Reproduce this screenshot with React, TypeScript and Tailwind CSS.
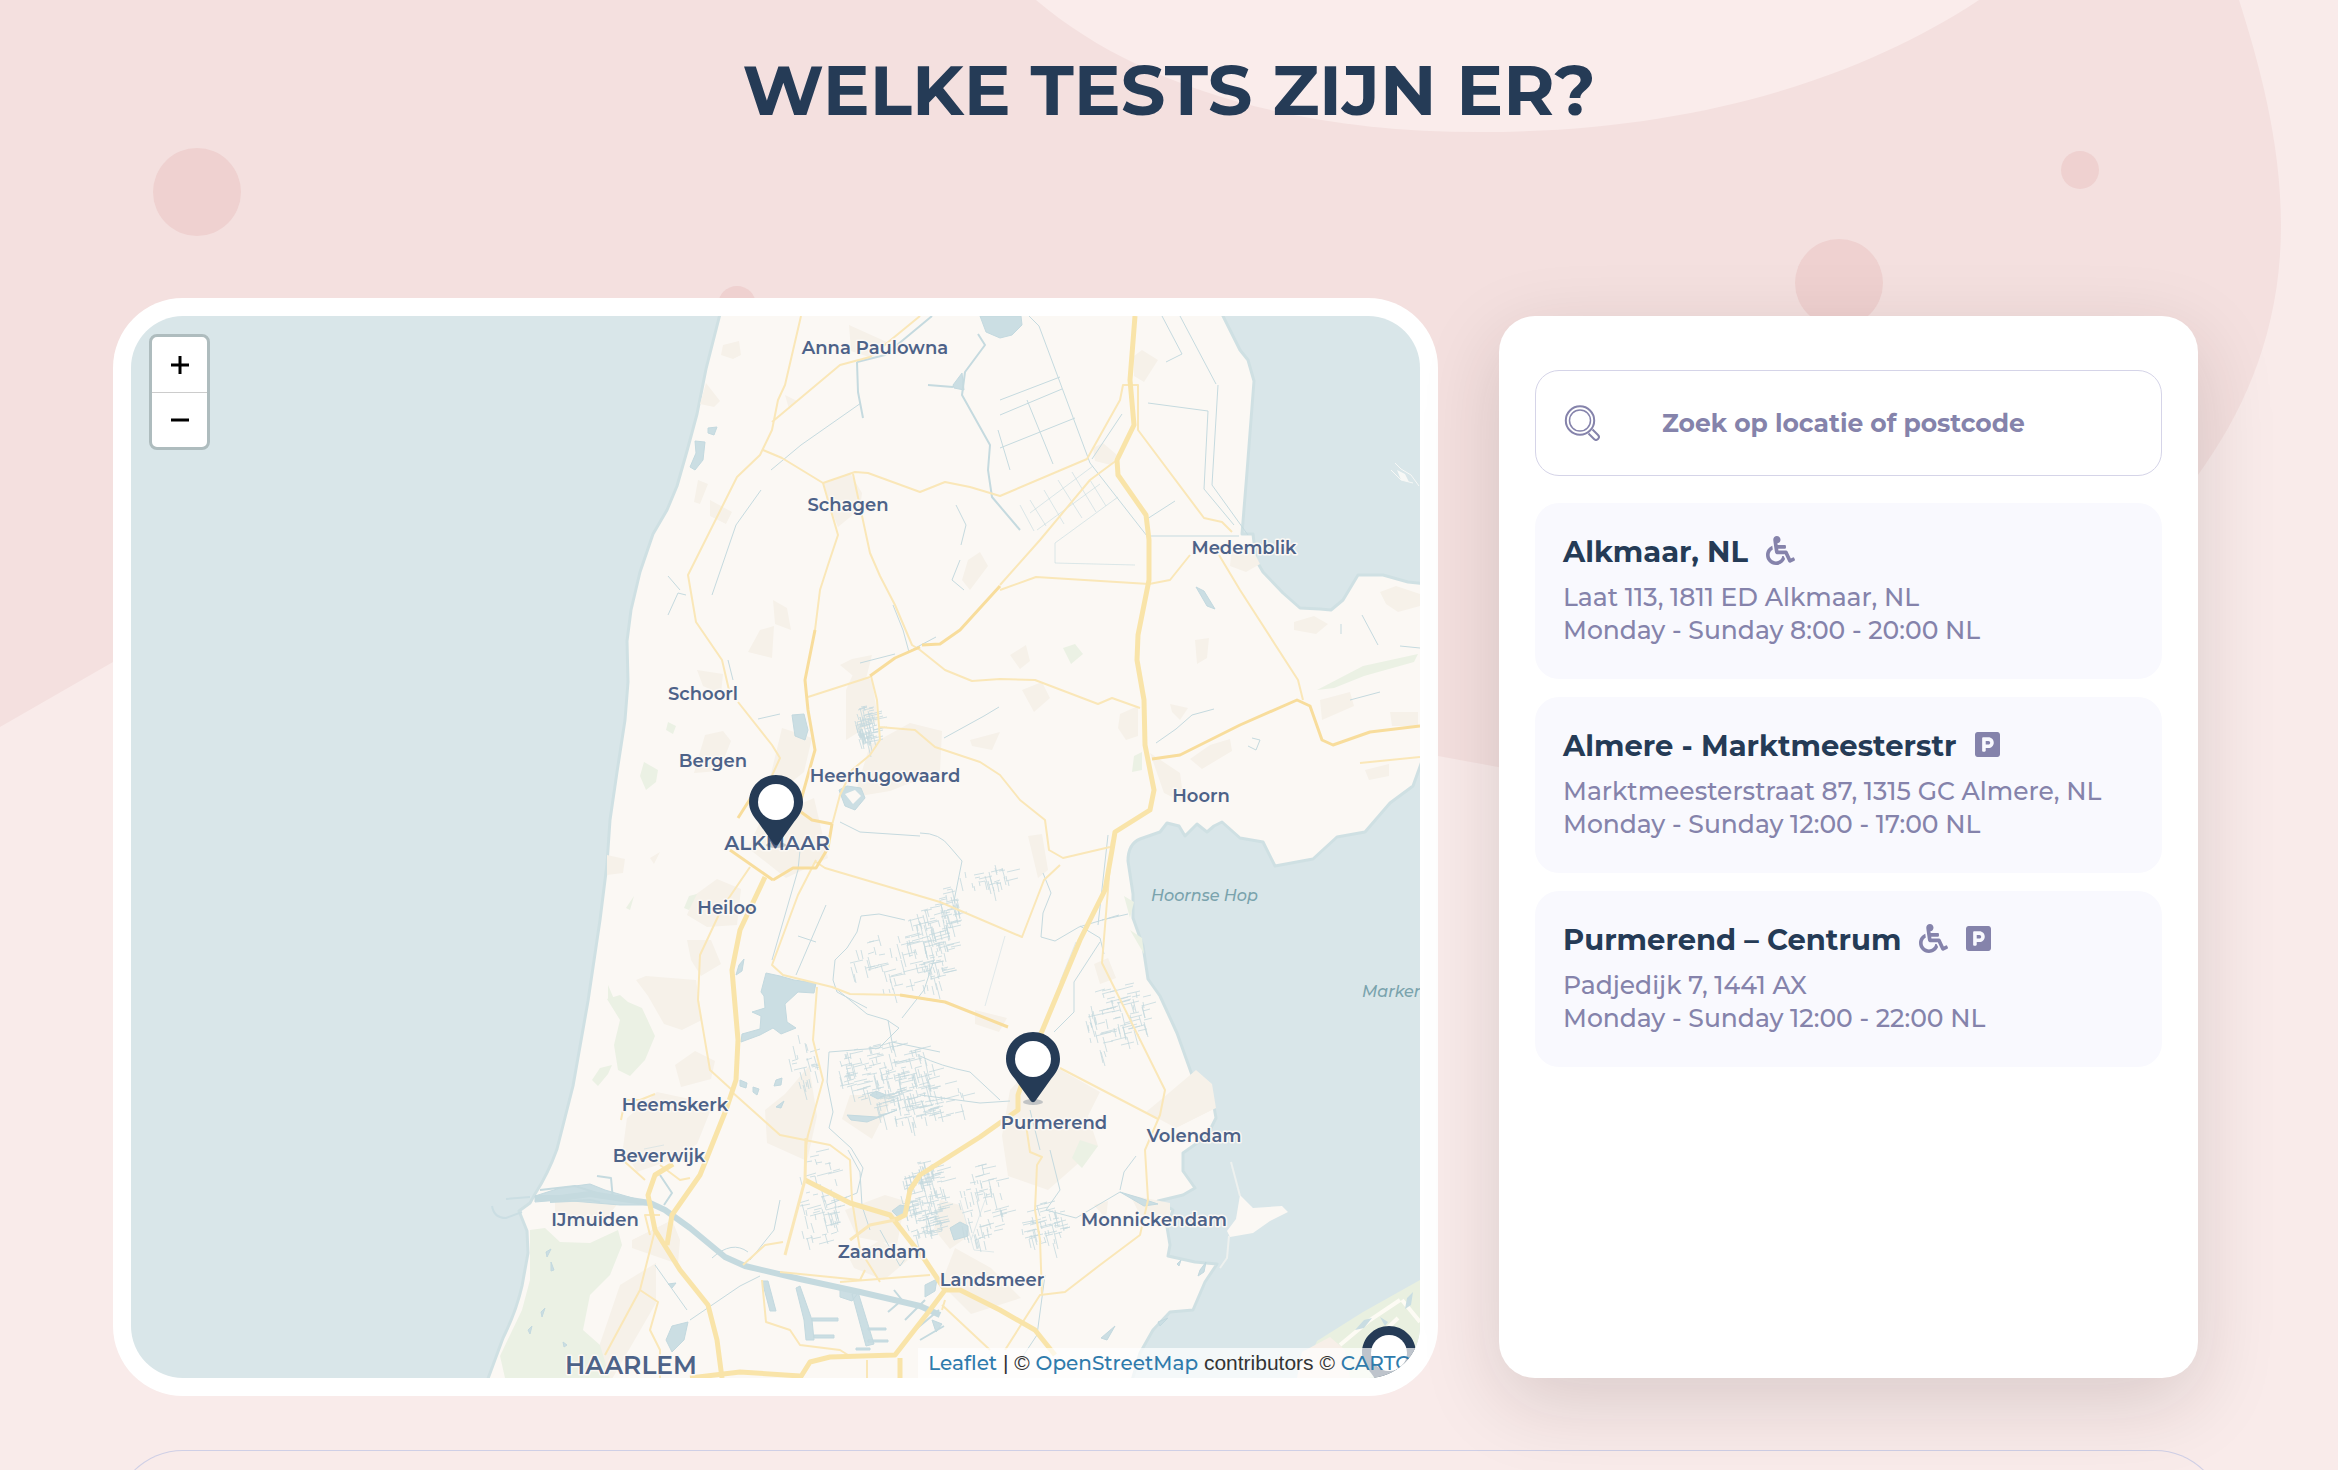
import React from "react";
import { FaParking, FaWheelchair } from "react-icons/fa";

type Amenity = "wheelchair" | "parking";

interface Location {
  name: string;
  address: string;
  hours: string;
  amenities: Amenity[];
}

const locations: Location[] = [
  { name: "Alkmaar, NL", address: "Laat 113, 1811 ED Alkmaar, NL", hours: "Monday - Sunday 8:00 - 20:00 NL", amenities: ["wheelchair"] },
  { name: "Almere - Marktmeesterstr", address: "Marktmeesterstraat 87, 1315 GC Almere, NL", hours: "Monday - Sunday 12:00 - 17:00 NL", amenities: ["parking"] },
  { name: "Purmerend – Centrum", address: "Padjedijk 7, 1441 AX", hours: "Monday - Sunday 12:00 - 22:00 NL", amenities: ["wheelchair", "parking"] },
];

const towns: { name: string; x: number; y: number; size?: number }[] = [
  { name: "Anna Paulowna", x: 875, y: 354 },
  { name: "Schagen", x: 848, y: 511 },
  { name: "Schoorl", x: 703, y: 700 },
  { name: "Bergen", x: 713, y: 767 },
  { name: "Heerhugowaard", x: 885, y: 782 },
  { name: "Medemblik", x: 1244, y: 554 },
  { name: "Hoorn", x: 1201, y: 802 },
  { name: "ALKMAAR", x: 777, y: 850, size: 20 },
  { name: "Heiloo", x: 727, y: 914 },
  { name: "Heemskerk", x: 675, y: 1111 },
  { name: "Beverwijk", x: 659, y: 1162 },
  { name: "IJmuiden", x: 595, y: 1226 },
  { name: "Zaandam", x: 882, y: 1258 },
  { name: "HAARLEM", x: 631, y: 1374, size: 25 },
  { name: "Purmerend", x: 1054, y: 1129 },
  { name: "Volendam", x: 1194, y: 1142 },
  { name: "Monnickendam", x: 1154, y: 1226 },
  { name: "Landsmeer", x: 992, y: 1286 },
];

const MAINLAND =
  "M721 310 706 369 697 414 687 451 677 486 667 510 653 534 640 572 631 610 627 641 628 682 625 720 617 772 610 820 607 864 600 920 588 1001 573 1086 557 1149 Q548 1174 535 1194 L530 1203 519 1211 527 1231 528 1253 522 1286 Q516 1312 503 1338 L486 1384 H1131 L1140 1353 1153 1330 1170 1312 1193 1310 1205 1282 1217 1264 1195 1262 1168 1256 1170 1245 1167 1227 1173 1210 1158 1201 1183 1195 1195 1188 1183 1171 1183 1153 1207 1136 1216 1118 1213 1101 1203 1090 1192 1075 1177 1033 1160 996 1148 979 1143 946 1133 918 1133 894 1128 861 Q1128 844 1140 839 L1160 832 1167 823 1179 826 1185 836 1197 824 1207 832 1214 826 1222 822 1240 838 1263 842 1275 866 1313 859 1337 837 1365 832 1390 803 1413 786 1426 750 V584 L1408 582 1383 575 1358 575 1343 600 1331 610 1320 609 1300 608 1283 593 1263 572 1256 560 1253 534 H1242 L1247 472 1254 381 1248 360 1240 350 1220 310Z";

const hatch = (cx: number, cy: number, rx: number, ry: number, seed: number, count: number): string => {
  let s = seed;
  const rnd = () => {
    s = (s * 16807) % 2147483647;
    return s / 2147483647;
  };
  rnd();
  rnd();
  let d = "";
  for (let i = 0; i < count; i++) {
    const angle = rnd() * Math.PI * 2;
    const radius = Math.sqrt(rnd());
    const px = cx + Math.cos(angle) * radius * rx;
    const py = cy + Math.sin(angle) * radius * ry;
    const len = 4 + rnd() * 12;
    const across = rnd() > 0.5;
    const dx = across ? len : len * 0.25;
    const dy = across ? -len * 0.25 : len;
    d += `M${Math.round(px)} ${Math.round(py)}l${Math.round(dx)} ${Math.round(dy)}`;
  }
  return d;
};

const ditches = [
  hatch(890, 962, 40, 28, 1101, 50),
  hatch(928, 945, 24, 42, 2303, 110),
  hatch(885, 1072, 52, 32, 3105, 170),
  hatch(905, 1105, 32, 20, 4107, 55),
  hatch(818, 1200, 20, 50, 5109, 60),
  hatch(802, 1060, 14, 26, 6111, 26),
  hatch(922, 1200, 22, 40, 7113, 150),
  hatch(980, 1205, 22, 40, 8115, 70),
  hatch(1044, 1225, 24, 22, 9117, 60),
  hatch(1108, 1020, 24, 34, 10119, 50),
  hatch(1132, 1010, 18, 28, 11121, 36),
  hatch(985, 876, 26, 12, 12123, 30),
  hatch(940, 1100, 26, 18, 13125, 26),
  hatch(865, 724, 10, 20, 14127, 80),
  hatch(948, 905, 10, 20, 15129, 36),
].join("");

function MapArt() {
  return (
    <svg
      className="absolute inset-0 h-full w-full"
      viewBox="131 316 1289 1062"
      preserveAspectRatio="xMidYMid slice"
      role="img"
      aria-label="Kaart van Noord-Holland"
      fontFamily="Montserrat, Inter, sans-serif"
    >
      <rect x="131" y="316" width="1289" height="1062" fill="#d9e6e9" />
      <path d={MAINLAND} fill="#fbf8f4" stroke="#cfe0e3" strokeWidth="3" strokeLinejoin="round" />
      <path d="M1240 1195 1253 1208 1282 1206 1288 1212 1270 1221 1253 1233 1230 1237 1227 1231 1236 1219Z" fill="#fbf8f4" />
      <path d="M1231 1162 1240 1196M1229 1236 1227 1258 1220 1268" stroke="#eef1ef" strokeWidth="2" fill="none" />
      <path d="M1420 1280 1363 1312 1317 1341 1300 1378H1420Z" fill="#e9f0e0" />
      <path d="M1330 1337 1302 1352 1297 1378H1350L1345 1350Z" fill="#f7efe8" />
      <path d="M1340 1345 1370 1320 1400 1300M1375 1340 1398 1318M1402 1300 1420 1322" stroke="#fdfbf4" strokeWidth="4" fill="none" />
      <path d="M1355 1330 1364 1320 1372 1318 1364 1328ZM1407 1298l6-6-2 13-6 4ZM1380 1317l8 5-3 4Z" fill="#c9dde2" />
      <path d="m1397 470 8 4 4 8-8-2Z" fill="#f7f8f6" />
      <path d="m1395 463 6 6 10 6 8 11M1391 470l10 10 12 3" stroke="#f7f8f6" strokeWidth="1" fill="none" />

      {/* Built-up areas */}
      <g fill="#f6f1e9">
        <path d="M823 483l27-10 12 20-2 16-22 18-8-20ZM849 325l40 18-20 14-18-6ZM723 345l16-4 2 14-8 4-12-4ZM706 383l14 18-6 6-14-3ZM785 395l12 6-8 8ZM698 480l10 4-8 20-6-2ZM710 500l22 12-6 12-16-8ZM773 600l14 8 4 22-16-6ZM760 630l14-4-2 32-24-6ZM840 665l12-6 20-4-6 24-14-4ZM697 670l26 4-2 20-18-8ZM705 735l18-4 8 10-12 30-25 2ZM782 728l30 10-8 34-30 24-5-14ZM846 690l8-18 18 8 6 40-32 20ZM870 745l40-22 32 8-2 40-50 20-36 6ZM970 740l30-8-8 18-20-4ZM968 560l12-8 8 14-18 24-8-10Z" />
        <path d="M760 822l54-24 14 60-42 20-38-30ZM695 895l22-16 24 10-4 36-30 2-20-12ZM687 940h24l10 24-20 12-10-16ZM636 980l10-4 50 4 6 40-20 10-18-6-16-28ZM675 1065l20-14 20 10-4 18-30 8ZM627 1118l30-26 56 12-16 40-20 14-40 14-14-24ZM765 1110l20-16 24-28 8 50-10 45-40-18ZM850 1095h44l-22 44-30-20ZM555 1195h70l-20 24-30 8-20-14ZM632 1240l40-20 8 20-2 24-46-16ZM620 1285l36-22v40l-44 76-22-6ZM845 1210l40-15 20 6-8 44-40-8ZM850 1260l30-20 28 20-24 20-30-12ZM800 835l10-6-2 18-8 6ZM607 855l18 4-2 14-16 2ZM650 858l10-6-6 12Z" />
        <path d="M1134 356l8-6 16 10-14 22-10-6ZM1093 448l10-5 14 12-6 10-16-4ZM1232 546l20 2 8 16-14 8-16-6ZM1380 592l16-6 24 8v12l-22 6-12-8ZM1294 622l20-6 14 8-12 10-22-4ZM1320 700l30-8 4 14-32 14ZM1195 640l14-2-2 20-10 6ZM1120 714l18-8v30l-12 4-8-12ZM1170 704l18 4-8 12-8-8ZM1022 690l20-8 8 16-16 14ZM1210 745l20-6 2 12-30 18-12-10ZM1150 753l30 20 4 30-20-10ZM1010 655l16-10 4 16-10 8ZM1390 712h28v14h-26ZM1365 770l24-6v12l-20 4Z" />
        <path d="M1010 1090l30-32 60 34-12 24 10 30-50 44-40-14-6-40ZM975 1010l32 8-8 14-24-8ZM1094 964l14-6 8 20-16 6ZM1028 836l14-2 6 36-10 8ZM1170 1092l26-22 16 14 4 24-40 20-30-16ZM940 1200l20 5 10 30-20 14-16-20ZM955 1248l36 20 30 30-50 16-30-30ZM1130 1195l40 8v16l-30-4ZM1094 1205l14-4-2 18Z" />
      </g>
      {/* Parks and dunes */}
      <path
        fill="#ebf1e4"
        d="M530 1230 545 1228 560 1242 590 1243 618 1230 622 1245 610 1275 590 1295 583 1330 600 1345 610 1378H505L500 1356 522 1310 530 1280ZM607 999 620 995 628 1002 642 1008 655 1036 645 1060 630 1076 618 1070 614 1045 620 1020ZM592 1080 600 1068 612 1065 608 1074 598 1086ZM608 985l6 14h-6ZM626 908l8-12-4 14ZM1063 648l12-4 8 10-12 10ZM668 722l8 4-3 8-7-4ZM644 762l14 8-2 12-10 8-6-14ZM1080 1140l18 6-16 22-10-10ZM1134 756l8-4v18l-10 2ZM1124 896l10 6-4 16ZM1130 930l12 8 2 16ZM1317 690l46-24 55-12-4 8-50 14-30 12ZM684 908l5-12 8-2-8 16Z"
      />
      {/* Lakes and harbours */}
      <g fill="#cbdee3" stroke="#c3d9df" strokeWidth="1">
        <path d="M980 316H1021L1022 325 1012 335 1000 338 986 332ZM953 385l9-12 2 17-10-2ZM708 428l9-1-3 8-6-2ZM695 441l10 1-2 18-8 10-5-3 6-14ZM792 715l12-1 4 16-3 10-10-4ZM1196 587l8 4 11 18-8-3Z" />
        <path d="M766 973 780 976 794 980 816 983 814 993 798 992 785 1004 787 1022 796 1028 781 1034 773 1028 760 1035 741 1042 742 1034 760 1029 761 1016 752 1012 765 1008 764 996 761 992Z" />
        <path d="M739 965l5-6-2 12-6 4ZM740 1080l7 3-1 5-6-2ZM753 1087l6 2-2 6-4-3ZM776 1080l6-2-1 7-7 1ZM776 1107l8-6-3 7Z" />
        <path d="M535 1196 560 1188 590 1184 605 1190 650 1203 653 1205 620 1205 560 1200 535 1202Z" />
        <path d="M960 1222 968 1226 968 1236 954 1240 950 1228ZM892 1211l8-6 10 2-4 8-8 2ZM847 1115l30 2 20-7-30 12-16-2ZM870 1095l6-4 10 4-8 4Z" />
        <path d="M768 1281l8 30h-6l-8-30ZM800 1286l12 34 2 20h-8l-2-20-8-32ZM812 1318h26v3h-26ZM814 1335h20v3h-20ZM858 1292l16 52-8 2-14-52ZM868 1328h18v2h-18ZM868 1340h20v2h-20ZM856 1348h14v2h-14ZM840 1290l18 3-6 8-12-4Z" />
        <path d="M672 1326l16-4-4 18-12 12-6-12ZM546 1252l5-3-4 8ZM551 1262l3 8-3 1ZM541 1312l4-4-3 9ZM528 1330l4-4-2 8ZM563 1342l4 3-3 2ZM668 1284l8-1-4 5ZM839 790l8-4 14 2 4 10-10 12-10-4Z" />
        <path d="M1101 1338l14-12-8 14ZM1177 1264l4-4-2 6ZM1200 1270l6-8-2 10-6 4ZM1158 1322l10-4-8 8ZM925 1285l12-6-2 12-10 6ZM932 1320l10 4-6 8ZM1120 1192l20 6 18 6-14 2Z" />
      </g>
      <path d="M845 794l10-4 6 6-8 8Z" fill="#fbf8f4" />
      <path d="M492 1206q2 12 14 12l16-6M506 1199l24-2" stroke="#cbdee3" strokeWidth="2" fill="none" />

      {/* Canals */}
      <g fill="none" stroke="#c5dadf" strokeWidth="1" strokeLinejoin="round">
        <path d={ditches} opacity=".8" />
        <path d="M535 1198H560L590 1194 650 1203 665 1210 690 1228 725 1257 745 1266 800 1279 860 1292 920 1306 940 1315" strokeWidth="6" />
        <path d="M540 1190 575 1186 600 1194 630 1198M550 1202 590 1200 600 1202M597 1176l14 2 2 22M660 1175l12 18-8 12M888 1312l14-12-8-10M905 1320l20-20M915 1330l24-20M920 1340l24-14" strokeWidth="2" />
        <path d="M978 334 985 345 965 372 962 395 990 445 988 470 992 497 1020 530M857 362l1 30 5 26M928 385l25 2M857 362 885 355 932 316" strokeWidth="2" />
        <path d="M1029 316l10 10 51 137 57 73h92M1092 459l30-45M1147 519l28-18M1180 316l36 68M1162 316l20 38-16 8M1148 403l60 8-4 78 30 36M1218 385l-6 100 36 50M1000 400l60-23M1000 415l62-26M1000 448l75-30M1027 400l26 64M1010 470l-12-40" />
        <path d="M1030 513 1093 466M1037 530 1100 484M1055 543 1118 497M1030 500l16 26M1044 490l20 34M1058 480l24 38M1072 472l24 40M1020 505l14 26M1090 480l16 26M1055 543v20l80 2" opacity=".6" />
        <path d="M860 663 895 654M893 605l10 25 6 22M902 655l34-18M956 505l10 20-5 20M960 560l-8 20 12 10M944 738l40-22 15-9M758 719l22-5M728 660l5 20M771 470l30-25 60-42M712 595l24-70 25-35M668 615l10-22 8 2M680 590l-12-14" />
        <path d="M840 822l20 10 60 4M800 850l-2 20-26 90M826 905l-30 70M798 936l18 6M834 987l33 27 20 6 12 8-20 20-50 4-2 30 6 30-4 16 22 20 12 20-6 25-30 12M888 1020l4 22 48 10M905 920l-26-6-18 2-4 16-10 16-12 12-2 20 4 12 30 16M934 960l-10 30-22 28M1043 873l8 20-8 20-2 24 14 4 24-14 40-12M1100 942l-26 40v30l-20 20M920 833q20 0 30 14l12 14-8 40M1080 926l20 12 4 16M1128 914l-26 6" />
        <path d="M920 1056q20 10 50 16l30 28M920 1095l60 8 30-2M1030 1110l10 40M1050 1150l10 40-14 20 30 8 44-26M1120 1190l4-18 12-16M1045 1275l-8 60-20 30M780 1200l-6 30-24 30M848 1150l12 22 2 34 8 24M880 1230l20 36 14-20M655 1265l32 45M712 1258q20-18 36-6M690 1320l50-34 20-10" />
        <path d="M1156 743l20-14 16-14 22-6M1362 615l16 30M1400 646l20 2M1350 700l30-8M1252 738l8 2-4 10-8-4M1341 624v10M1108 835l-10 90" />
        <path d="M664 1145l-20 4M905 1200l30 4M960 1200l14 50 20 2M985 1200l-14 40M1060 982l16-40M985 1006l20-70" opacity=".5" />
      </g>

      {/* Secondary roads */}
      <g fill="none" stroke="#fae7b8" strokeWidth="2" strokeLinejoin="round">
        <path d="M801 316 785 385 778 400 772 430 760 455 737 477 688 575 696 622 722 660 729 690M738 702 772 745 780 758 770 780M772 422 840 365 870 357 920 316M763 450 782 458 823 483 855 472 868 473 920 492 945 482 970 487 1000 496 1087 459 1120 400 1123 385H1138V430L1204 518 1222 522 1232 532" />
        <path d="M823 483 838 535 828 565 820 590 815 630M853 474 870 553 880 576 895 605 912 645 920 650 945 670 972 681 1000 679 1035 680 1098 704 1112 698 1140 708M808 697 870 677M871 676 877 700 880 740 870 755 852 770 840 795 832 825M879 727 915 730 935 747 980 762 1000 775 1020 800 1045 820 1049 850 1063 858 1110 847M1219 555 1240 590 1298 680 1303 700M1149 584 1036 577 1000 590M1149 584 1170 580 1190 555M1117 460 1090 480 1040 540 1000 585" />
        <path d="M750 867 722 908 700 955 698 1000 710 1070 732 1090M816 862 825 868 940 902 1022 937 1044 880 1060 865M816 860 798 895 772 965 783 975 832 987 850 994 900 995 945 1002M817 987 813 1040 823 1080 808 1135 806 1145M732 1092 780 1135 830 1145 850 1160 852 1200 860 1250 880 1282" />
        <path d="M655 1094 640 1100 625 1100 621 1120M625 1162 645 1180M660 1165 680 1180 690 1178M655 1230 640 1290 605 1355M640 1290 658 1302 650 1330 660 1350V1378M743 1265 765 1245 783 1242M780 1272 860 1280 865 1270M762 1280 766 1322 790 1330 800 1345 840 1350 848 1355M840 1282 930 1275M660 1215H645L650 1235M867 1360V1378" />
        <path d="M1112 840 1102 963 1165 1090 1160 1115 1145 1150 1148 1200 1140 1235 1100 1265 1065 1292 1040 1295 1005 1350M1060 1068 1158 1119M1025 1118 1030 1152 1042 1157 1037 1165 1035 1210 1040 1240 1042 1295M942 1310 945 1300M942 1305 990 1350M1360 763 1420 757" />
      </g>
      {/* Main roads */}
      <g fill="none" stroke="#f8dd9c" strokeWidth="3" strokeLinejoin="round">
        <path d="M1000 586 960 630 940 644 922 645M920 647 895 658 870 676M815 630 805 680 808 710 815 750 801 800M801 812 812 820 832 824M832 824 828 848 816 868 793 868 773 880M730 850 773 880M900 995 945 1002 1008 1027M1152 759 1180 755 1210 740 1240 725 1297 700 1310 706 1322 740 1333 745 1370 732 1420 726M738 818 752 796" />
      </g>
      {/* Motorways */}
      <g fill="none" stroke="#f9e4a9" strokeWidth="5" strokeLinejoin="round">
        <path d="M1135 316 1130 380 1134 425 1117 460 1118 475 1146 515 1149 540V580L1138 635 1137 660 1144 700 1145 745 1154 790 1150 810 1115 832 1112 850 1105 890 1080 940 1030 1060 1018 1095 1018 1110 980 1137 920 1175 910 1190 905 1215 895 1220" />
        <path d="M765 877 740 930 732 970 738 1040 736 1080 726 1110 700 1175 672 1215 667 1245M673 1164 655 1175 648 1195 655 1230 680 1270 708 1305 717 1340 722 1378" />
        <path d="M805 1180 850 1203 890 1215 925 1260 945 1290 930 1310 895 1355 830 1357 810 1362 800 1378M943 1290H960L1000 1310 1035 1330 1055 1355M690 1378 740 1372 800 1376M900 1358V1378" />
      </g>
      <path d="M806 1138 805 1180 785 1255M850 1240 870 1225 895 1220" fill="none" stroke="#fae7b8" strokeWidth="3" />

      <g fill="#4d6288" fontWeight="600" textAnchor="middle" stroke="#fbf8f4" strokeWidth="3" strokeLinejoin="round" paintOrder="stroke">
        {towns.map((town) => (
          <text key={town.name} x={town.x} y={town.y} fontSize={town.size ?? 18}>
            {town.name}
          </text>
        ))}
      </g>
      <g fill="#7aa3ad" fontSize="16" fontStyle="italic" fontWeight="500">
        <text x="1151" y="901">Hoornse Hop</text>
        <text x="1362" y="997">Marker</text>
      </g>
    </svg>
  );
}

function Pin({ label, place }: { label: string; place: string }) {
  return (
    <button type="button" aria-label={label} className={`absolute w-[54px] -translate-x-1/2 ${place}`}>
      <svg viewBox="0 0 54 74" className="block w-full">
        <ellipse cx="27" cy="70" rx="10" ry="3" fill="#253b56" opacity=".25" />
        <path d="M27 0C12 0 0 12 0 27c0 8 4 14 9 20l15 21c2 3 4 3 6 0l15-21c5-6 9-12 9-20C54 12 42 0 27 0Z" fill="#253b56" />
        <circle cx="27" cy="27" r="18" fill="#fff" />
      </svg>
    </button>
  );
}

function MapPanel() {
  return (
    <div className="min-w-0 rounded-[70px] bg-white p-[18px]">
      <div className="relative h-[1062px] overflow-hidden rounded-[52px]">
        <MapArt />
        <Pin label="Alkmaar, NL" place="left-[50%] top-[43.2%]" />
        <Pin label="Purmerend – Centrum" place="left-[70%] top-[67.4%]" />
        <Pin label="Almere - Marktmeesterstr" place="left-[97.6%] top-[95.1%]" />
        <div className="absolute left-[18px] top-[18px] flex w-[61px] flex-col overflow-hidden rounded-lg border-[3px] border-[#aebcbe] bg-white text-black">
          <button type="button" aria-label="Zoom in" className="flex h-14 items-center justify-center border-b border-[#ccc]">
            <svg viewBox="0 0 18 18" className="size-[18px]" stroke="currentColor" strokeWidth="3">
              <path d="M0 9H18M9 0V18" />
            </svg>
          </button>
          <button type="button" aria-label="Zoom out" className="flex h-[54px] items-center justify-center">
            <svg viewBox="0 0 18 18" className="size-[18px]" stroke="currentColor" strokeWidth="3">
              <path d="M0 9H18" />
            </svg>
          </button>
        </div>
        <div className="absolute bottom-0 right-0 whitespace-nowrap bg-white/70 pl-2.5 pr-2 font-['Liberation_Sans',sans-serif] text-[21px] leading-[29px] text-[#333]">
          <a href="#leaflet" className="font-[Montserrat,Inter,sans-serif] text-[20px] font-medium text-[#2f7bac]">Leaflet</a> | ©{" "}
          <a href="#openstreetmap" className="font-[Montserrat,Inter,sans-serif] text-[20px] font-medium text-[#2f7bac]">OpenStreetMap</a> contributors ©{" "}
          <a href="#carto" className="font-[Montserrat,Inter,sans-serif] text-[20px] font-medium text-[#2f7bac]">CARTO</a>
        </div>
      </div>
    </div>
  );
}

function SearchBox() {
  return (
    <label className="relative flex h-[106px] items-center rounded-3xl border border-[#d5d4e8] pl-7">
      <svg viewBox="0 0 36 36" className="size-9 shrink-0" fill="none" stroke="#8583ab" strokeWidth="2">
        <circle cx="16" cy="15.5" r="14.2" />
        <circle cx="16" cy="15.5" r="10.5" strokeWidth="1.5" />
        <path d="M24.5 28.5 30 34a2.6 2.6 0 0 0 4-4l-5.500-5.500" strokeLinejoin="round" />
      </svg>
      <input
        type="text"
        aria-label="Zoek op locatie of postcode"
        placeholder="Zoek op locatie of postcode"
        className="h-full min-w-0 flex-1 bg-transparent pl-[62px] pr-6 text-[25px] font-bold text-[#8583ab] outline-none placeholder:text-[#8583ab]"
      />
    </label>
  );
}

function LocationCard({ location }: { location: Location }) {
  return (
    <li className="rounded-3xl bg-[#f9f9fe] px-7 pb-8 pt-[29px]">
      <div className="flex h-10 items-center gap-[18px]">
        <h2 className="text-[29px] font-bold leading-10 text-[#253b56]">{location.name}</h2>
        {location.amenities.map((amenity) =>
          amenity === "wheelchair" ? (
            <FaWheelchair key={amenity} title="Rolstoeltoegankelijk" className="-mt-1 size-[29px] text-[#8583ab]" />
          ) : (
            <FaParking key={amenity} title="Parkeren" className="-mt-1 h-[29px] w-[25px] text-[#8583ab]" />
          ),
        )}
      </div>
      <p className="mt-[9px] text-[25px] font-medium leading-[33px] text-[#8583ab]">{location.address}</p>
      <p className="text-[25px] font-medium leading-[33px] text-[#8583ab]">{location.hours}</p>
    </li>
  );
}

function Backdrop() {
  return (
    <svg className="absolute inset-0 h-full w-full" viewBox="0 0 2338 1470" preserveAspectRatio="xMidYMin slice" aria-hidden="true">
      <path d="M0 0H2239C2258 60 2281 140 2281 225 2281 330 2245 410 2198 475 2060 660 1760 790 1498 767L1438 756C1200 690 1000 560 700 540 450 530 250 590 113 662L0 727Z" fill="#f4e0df" />
      <path d="M1036 0C1130 80 1280 132 1480 132 1680 132 1850 85 1979 0Z" fill="#faeceb" />
      <g fill="#efd1d0">
        <circle cx="197" cy="192" r="44" />
        <circle cx="737" cy="305" r="19" />
        <circle cx="1839" cy="283" r="44" />
        <circle cx="2080" cy="170" r="19" />
      </g>
    </svg>
  );
}

export default function App() {
  return (
    <main className="relative max-h-screen min-h-screen overflow-hidden bg-[#f9ebea] font-[Montserrat,Inter,sans-serif]">
      <Backdrop />
      <div className="relative px-[113px] pt-[44px]">
        <h1 className="text-center text-[70px] font-bold leading-[92px] text-[#253b56]">WELKE TESTS ZIJN ER?</h1>
        <div className="mt-[162px] grid grid-cols-[minmax(0,1325fr)_minmax(0,699fr)] gap-[61px] pr-[27px]">
          <MapPanel />
          <aside className="py-[18px]">
            <div className="h-full rounded-[36px] bg-white px-9 pt-[54px] shadow-[0_24px_80px_rgba(40,20,20,0.15)]">
              <SearchBox />
              <ul className="mt-[27px] flex flex-col gap-[18px]">
                {locations.map((location) => (
                  <LocationCard key={location.name} location={location} />
                ))}
              </ul>
            </div>
          </aside>
        </div>
        <section aria-label="Testen" className="mt-[54px] h-40 rounded-t-[70px] border border-b-0 border-[#cfcfe6]" />
      </div>
    </main>
  );
}
